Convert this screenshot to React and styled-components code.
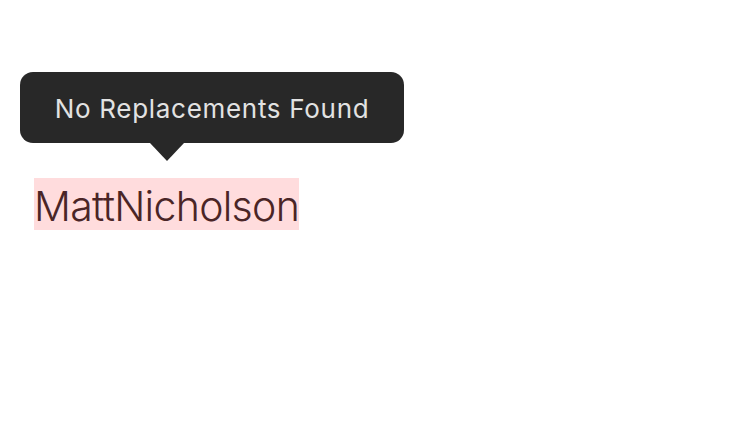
import React from 'react';
import styled, { createGlobalStyle } from 'styled-components';

const GlobalStyle = createGlobalStyle`
  html, body {
    margin: 0;
    padding: 0;
    background: #ffffff;
  }
  body {
    font-family: Inter, "Noto Sans", sans-serif;
  }
`;

function App() {
  return (
    <Page>
      <GlobalStyle />
      <Word>
        <Tooltip>
          No Replacements Found
          <Arrow />
        </Tooltip>
        MattNicholson
      </Word>
    </Page>
  );
}

const Page = styled.div`
  width: 750px;
  height: 428px;
  padding: 178px 0 0 34px;
  box-sizing: border-box;
`;

const Word = styled.span`
  position: relative;
  display: inline-block;
  height: 52px;
  line-height: 56px;
  width: 265px;
  background: #ffdcdd;
  color: #4a2526;
  font-size: 41px;
  font-weight: 300;
  letter-spacing: -0.7px;
  white-space: nowrap;
`;

const Tooltip = styled.div`
  position: absolute;
  left: -14px;
  bottom: calc(100% + 35px);
  width: 384px;
  height: 71px;
  display: flex;
  align-items: center;
  justify-content: center;
  padding-top: 2px;
  box-sizing: border-box;
  border-radius: 13px;
  background: #282828;
  color: #e2e2e2;
  font-size: 26px;
  font-weight: 400;
  letter-spacing: 0.7px;
  line-height: 1;
`;

const Arrow = styled.div`
  position: absolute;
  top: 100%;
  left: 130px;
  width: 0;
  height: 0;
  border-left: 17px solid transparent;
  border-right: 17px solid transparent;
  border-top: 18px solid #282828;
`;

export default App;
